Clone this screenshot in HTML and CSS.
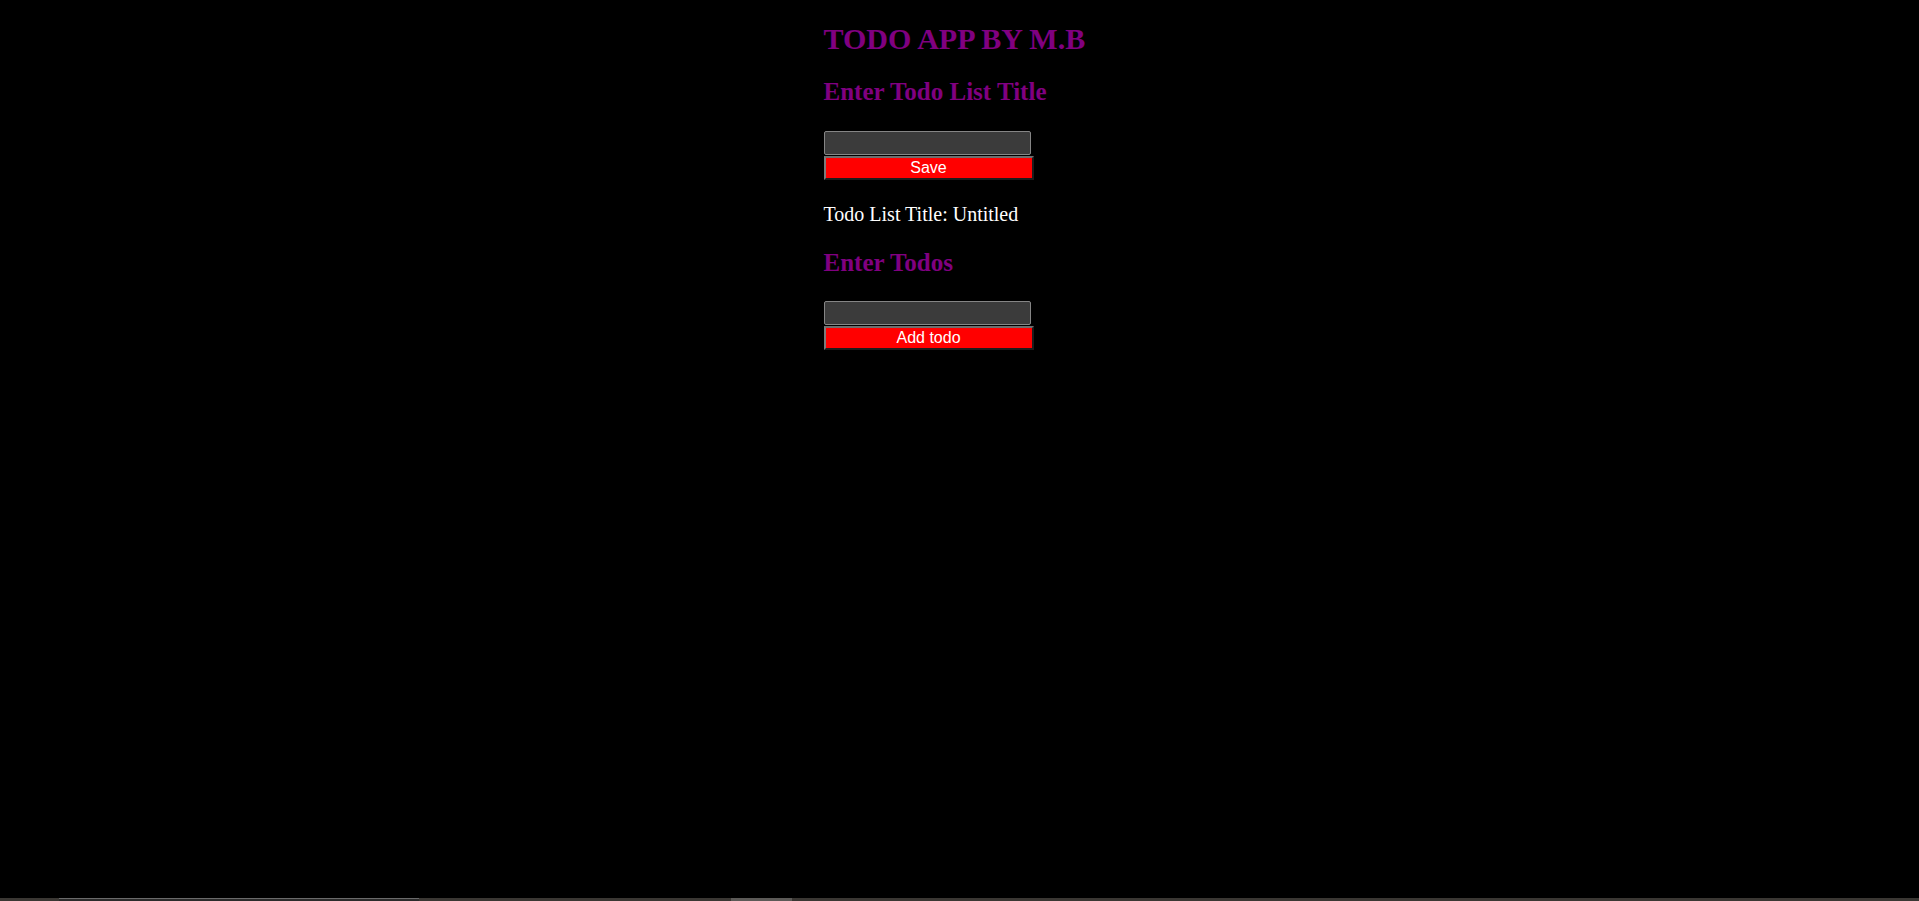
FILE: index.html
```html
<!DOCTYPE html>
<html lang="en">
<head>
<meta charset="utf-8">
<title>Todo App</title>
<link rel="stylesheet" href="styles.css">
</head>
<body>
<main class="app">
  <h1 class="app-title">TODO APP BY M.B</h1>
  <h2 class="section-title">Enter Todo List Title</h2>
  <form class="entry">
    <input class="entry-input" type="text">
    <button class="entry-button" type="button">Save</button>
  </form>
  <p class="list-title">Todo List Title: Untitled</p>
  <h2 class="section-title">Enter Todos</h2>
  <form class="entry">
    <input class="entry-input" type="text">
    <button class="entry-button" type="button">Add todo</button>
  </form>
</main>
<div class="bottom-strip">
  <span class="strip-a"></span>
  <span class="strip-b"></span>
  <span class="strip-c"></span>
  <span class="strip-d"></span>
  <span class="strip-e"></span>
</div>
</body>
</html>
```

FILE: styles.css
```css
html, body {
  margin: 0;
  padding: 0;
  background: #000000;
}

body {
  min-height: 901px;
  font-family: "Liberation Serif", "Times New Roman", serif;
  color: #ffffff;
}

.app {
  width: 272px;
  margin: 0 auto;
  padding-top: 23px;
  display: flex;
  flex-direction: column;
}

.app-title {
  margin: 0;
  font-size: 30px;
  line-height: 32px;
  font-weight: bold;
  color: #800080;
  white-space: nowrap;
}

.section-title {
  margin: 23px 0 0;
  font-size: 25px;
  line-height: 28px;
  font-weight: bold;
  color: #800080;
  white-space: nowrap;
}

.section-title + .entry {
  margin-top: 25px;
}

.list-title + .section-title {
  margin-top: 24px;
}

.list-title + .section-title + .entry {
  margin-top: 24px;
}

.entry {
  margin: 0;
  display: flex;
  flex-direction: column;
  align-items: flex-start;
}

.entry-input {
  box-sizing: border-box;
  width: 207px;
  height: 24px;
  margin: 0;
  padding: 1px 2px;
  background: #3b3b3b;
  border: 1px solid #858585;
  border-radius: 2px;
  color: #ffffff;
  font-family: "Liberation Sans", Arial, sans-serif;
  font-size: 16px;
}

.entry-button {
  box-sizing: border-box;
  width: 210px;
  height: 24px;
  margin: 1px 0 0;
  padding: 0;
  background: #ff0000;
  color: #ffffff;
  font-family: "Liberation Sans", Arial, sans-serif;
  font-size: 16px;
  line-height: 18px;
  border-style: solid;
  border-width: 2px;
  border-color: #6e6e6e #1c1c1c #1c1c1c #7c7c7c;
}

.list-title {
  margin: 23px 0 0;
  font-size: 20px;
  line-height: 22px;
  white-space: nowrap;
}

.bottom-strip {
  position: fixed;
  left: 0;
  right: 0;
  bottom: 0;
  height: 3px;
  display: flex;
  background: #3a3733;
}

.strip-a { width: 59px; }
.strip-b {
  width: 360px;
  background: #2b2b2b;
  border-top: 1px solid #6a6a6a;
  box-sizing: border-box;
}
.strip-c { width: 312px; }
.strip-d { width: 61px; background: #5c5a57; }
.strip-e { flex: 1; }
```
